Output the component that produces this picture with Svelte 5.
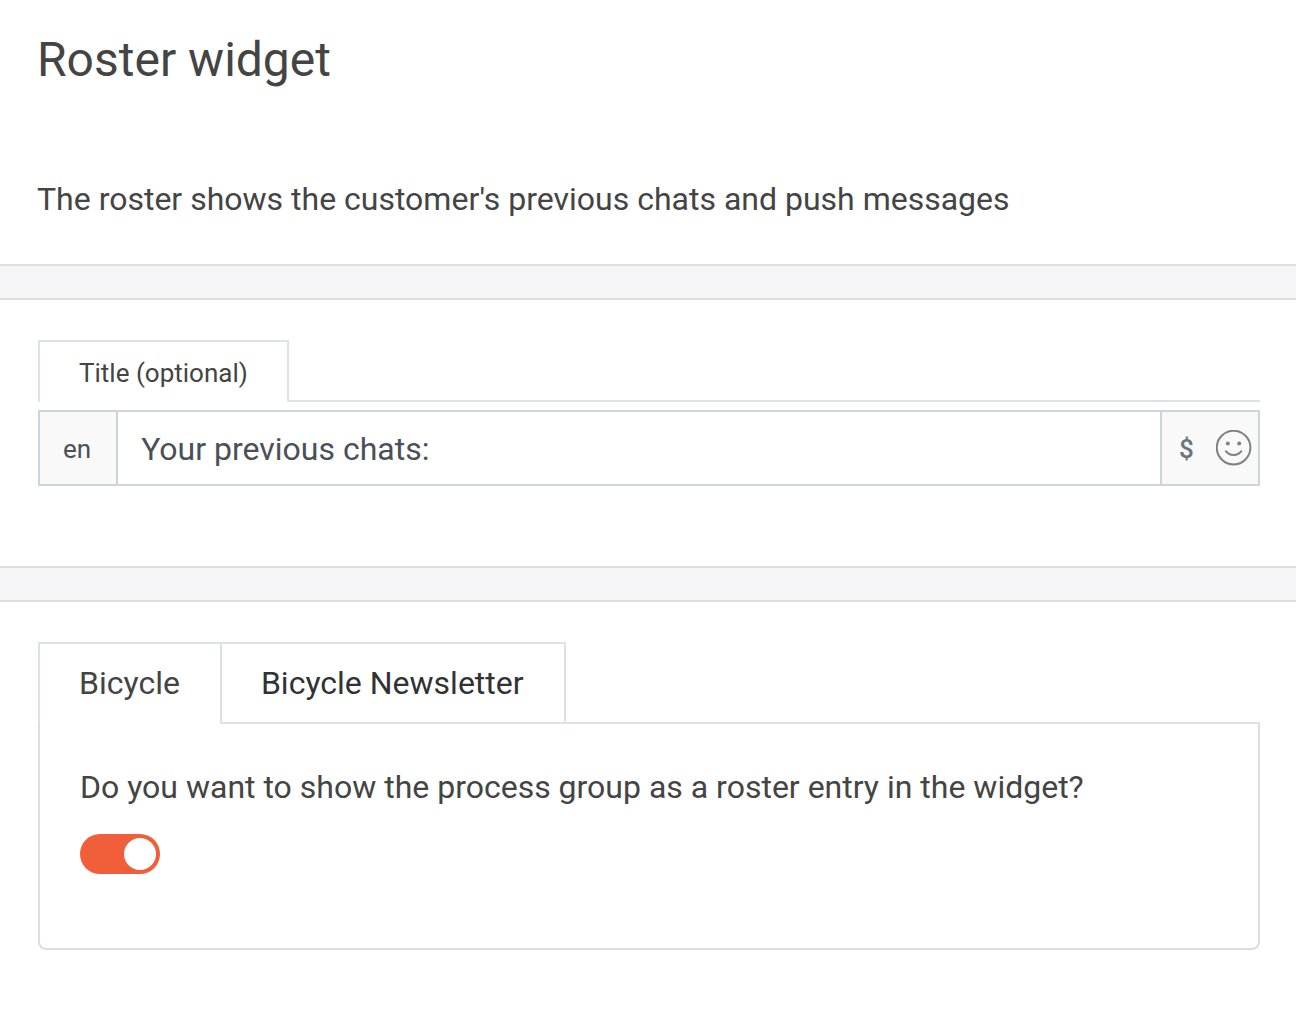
<script>
  let title = $state('Your previous chats:');
  let active = $state(0);
  let shown = $state([true, true]);
  const groups = ['Bicycle', 'Bicycle Newsletter'];
</script>

<main>
  <header>
    <h1>Roster widget</h1>
    <p>The roster shows the customer's previous chats and push messages</p>
  </header>

  <div class="band"></div>

  <section>
    <div class="label-row">
      <label for="roster-title">Title (optional)</label>
    </div>
    <div class="field">
      <span class="lang">en</span>
      <input id="roster-title" type="text" bind:value={title} />
      <div class="tools">
        <button type="button" class="dollar" aria-label="Insert variable">$</button>
        <button type="button" aria-label="Insert emoji">
          <svg width="36" height="36" viewBox="0 0 36 36" fill="none" stroke="#808080" stroke-width="2" stroke-linecap="round">
            <circle cx="17.6" cy="17.6" r="16.8" />
            <path d="M9.8 21.2c1.9 2.500 4.700 3.800 7.800 3.800s5.900-1.300 7.800-3.800" />
            <circle cx="11.8" cy="13.5" r="2" fill="#808080" stroke="none" />
            <circle cx="23.2" cy="13.5" r="2" fill="#808080" stroke="none" />
          </svg>
        </button>
      </div>
    </div>
  </section>

  <div class="band"></div>

  <section>
    <div class="tabs" role="tablist">
      {#each groups as group, i}
        <button type="button" role="tab" aria-selected={active === i} class:active={active === i} onclick={() => (active = i)}>{group}</button>
      {/each}
      <div class="rest"></div>
    </div>
    <div class="panel" role="tabpanel">
      <label for="show-group">Do you want to show the process group as a roster entry in the widget?</label>
      <input id="show-group" type="checkbox" role="switch" bind:checked={shown[active]} />
    </div>
  </section>
</main>

<style>
  :global(body) {
    margin: 0;
    background: #fff;
  }
  main {
    font-family: Roboto, 'Liberation Sans', sans-serif;
    font-size: 32px;
    line-height: 40px;
    color: #444;
  }
  main * {
    box-sizing: border-box;
  }
  button, input {
    font: inherit;
    color: inherit;
    margin: 0;
  }
  header {
    padding: 28px 37px 45px;
  }
  h1 {
    margin: 0 0 87px;
    font-size: 48px;
    line-height: 64px;
    font-weight: 400;
  }
  p {
    margin: 0;
  }
  .band {
    height: 36px;
    background: #f5f5f8;
    border: solid #ddd;
    border-width: 2px 0;
  }
  section {
    padding: 40px 36px 80px 38px;
  }
  .label-row {
    display: flex;
    margin-bottom: 8px;
    font-size: 26px;
  }
  .label-row label {
    height: 62px;
    padding: 11px 39px;
    border: 2px solid #dee2e6;
    border-bottom: 0;
  }
  .label-row::after {
    content: '';
    flex: 1;
    border-bottom: 2px solid #dee2e6;
  }
  .field {
    display: flex;
    height: 76px;
    border: 2px solid #ced4da;
    color: #495057;
  }
  .lang {
    padding: 17px 25px 17px 23px;
    background: #f9f9f9;
    border-right: 2px solid #ced4da;
    font-size: 26px;
  }
  .field input {
    flex: 1;
    min-width: 0;
    padding: 2px 23px 0;
    border: 0;
    background: #fff;
  }
  .tools {
    display: flex;
    align-items: center;
    justify-content: space-between;
    width: 98px;
    padding: 0 6px 0 17px;
    border-left: 2px solid #ced4da;
    background: #f9f9f9;
  }
  .tools button {
    display: flex;
    padding: 0;
    border: 0;
    background: none;
    color: #6c757d;
  }
  .tools .dollar {
    padding-top: 2px;
    font-size: 26px;
    font-weight: 500;
  }
  .tabs {
    display: flex;
  }
  .tabs button {
    height: 82px;
    padding: 0 40px 0 39px;
    border: solid #dee2e6;
    border-width: 2px 2px 2px 0;
    background: #fff;
    color: #303234;
  }
  .tabs button:first-child {
    border-left-width: 2px;
  }
  .tabs .active {
    border-bottom: 0;
    padding-bottom: 2px;
    color: #444;
  }
  .rest {
    flex: 1;
    border-bottom: 2px solid #dee2e6;
  }
  .panel {
    padding: 43px 40px 74px;
    border: 2px solid #ddd;
    border-top: 0;
    border-radius: 0 0 8px 8px;
  }
  .panel label {
    display: block;
    margin-bottom: 27px;
  }
  .panel input {
    appearance: none;
    display: flex;
    align-items: center;
    width: 80px;
    height: 40px;
    padding: 0 4px;
    border-radius: 20px;
    background: #b8bcc0;
  }
  .panel input::before {
    content: '';
    width: 32px;
    height: 32px;
    border-radius: 50%;
    background: #fff;
  }
  .panel input:checked {
    justify-content: flex-end;
    background: #f05f3a;
  }
</style>
